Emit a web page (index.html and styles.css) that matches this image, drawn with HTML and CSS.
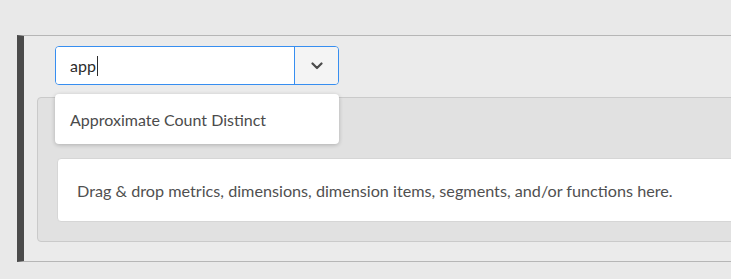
FILE: index.html
```html
<!DOCTYPE html>
<html lang="en">
<head>
  <meta charset="UTF-8" />
  <meta name="viewport" content="width=device-width, initial-scale=1.0" />
  <title>Freeform Table</title>
  <link rel="stylesheet" href="styles.css">
</head>
<body>
  <div class="panel">
    <div class="grip">
      <span></span><span></span><span></span><span></span>
    </div>
    <div class="combo">
      <div class="combo-input">app<span class="caret"></span></div>
      <button class="combo-btn" type="button">
        <svg width="12" height="8" viewBox="0 0 12 8">
          <path d="M1.5 1.5 L6 6 L10.5 1.5" fill="none" stroke="#4b4b4b" stroke-width="2.2" stroke-linecap="round" stroke-linejoin="round" />
        </svg>
      </button>
    </div>
    <div class="dropzone">
      <div class="card">Drag &amp; drop metrics, dimensions, dimension items, segments, and/or functions here.</div>
    </div>
    <div class="popover">
      <div class="option">Approximate Count Distinct</div>
    </div>
  </div>
</body>
</html>
```

FILE: styles.css
```css
html, body {
  margin: 0;
  padding: 0;
}
body {
  background: #e9e9e9;
  font-family: "Lato", "Open Sans", sans-serif;
  color: #4b4b4b;
  overflow: hidden;
  height: 279px;
}
.panel {
  position: relative;
  margin: 35px 0 0 17px;
  overflow: hidden;
  background: #ebebeb;
  border-top: 1px solid #b6b6b6;
  border-bottom: 1px solid #b6b6b6;
  border-left: 7px solid #4b4b4b;
  padding: 10px 0 19px 13px;
}
.grip {
  position: absolute;
  left: -3px;
  top: 101px;
  display: flex;
  flex-direction: column;
  gap: 3px;
}
.grip span {
  width: 3px;
  height: 4px;
  background: #b0b0b0;
}
.combo {
  display: flex;
  margin-left: 18px;
  width: 284px;
  height: 39px;
  box-sizing: border-box;
  border: 1px solid #378ef0;
  border-radius: 4px;
  overflow: hidden;
}
.combo-input {
  flex: 1;
  background: #fff;
  display: flex;
  align-items: center;
  padding-left: 14px;
  font-size: 16px;
  color: #2c2c2c;
}
.caret {
  display: inline-block;
  width: 1px;
  height: 20px;
  background: #2c2c2c;
  margin-left: 1px;
}
.combo-btn {
  width: 44px;
  border: none;
  border-left: 1px solid #378ef0;
  background: #f4f4f4;
  display: flex;
  align-items: center;
  justify-content: center;
  padding: 0;
}
.dropzone {
  margin-top: 12px;
  margin-right: -10px;
  height: 145px;
  box-sizing: border-box;
  background: #e1e1e1;
  border: 1px solid #cacaca;
  border-radius: 4px;
  padding: 60px 0 0 19px;
}
.card {
  height: 64px;
  box-sizing: border-box;
  background: #fff;
  border: 1px solid #d6d6d6;
  border-radius: 4px;
  display: flex;
  align-items: center;
  padding-left: 19px;
  font-size: 16.2px;
  color: #505050;
}
.popover {
  position: absolute;
  left: 31px;
  top: 58px;
  width: 284px;
  height: 50px;
  box-sizing: border-box;
  background: #fff;
  border-radius: 4px;
  box-shadow: 0 1px 4px rgba(0, 0, 0, 0.22);
  display: flex;
  align-items: center;
  padding-left: 15px;
  font-size: 16px;
  color: #4b4b4b;
}
```
